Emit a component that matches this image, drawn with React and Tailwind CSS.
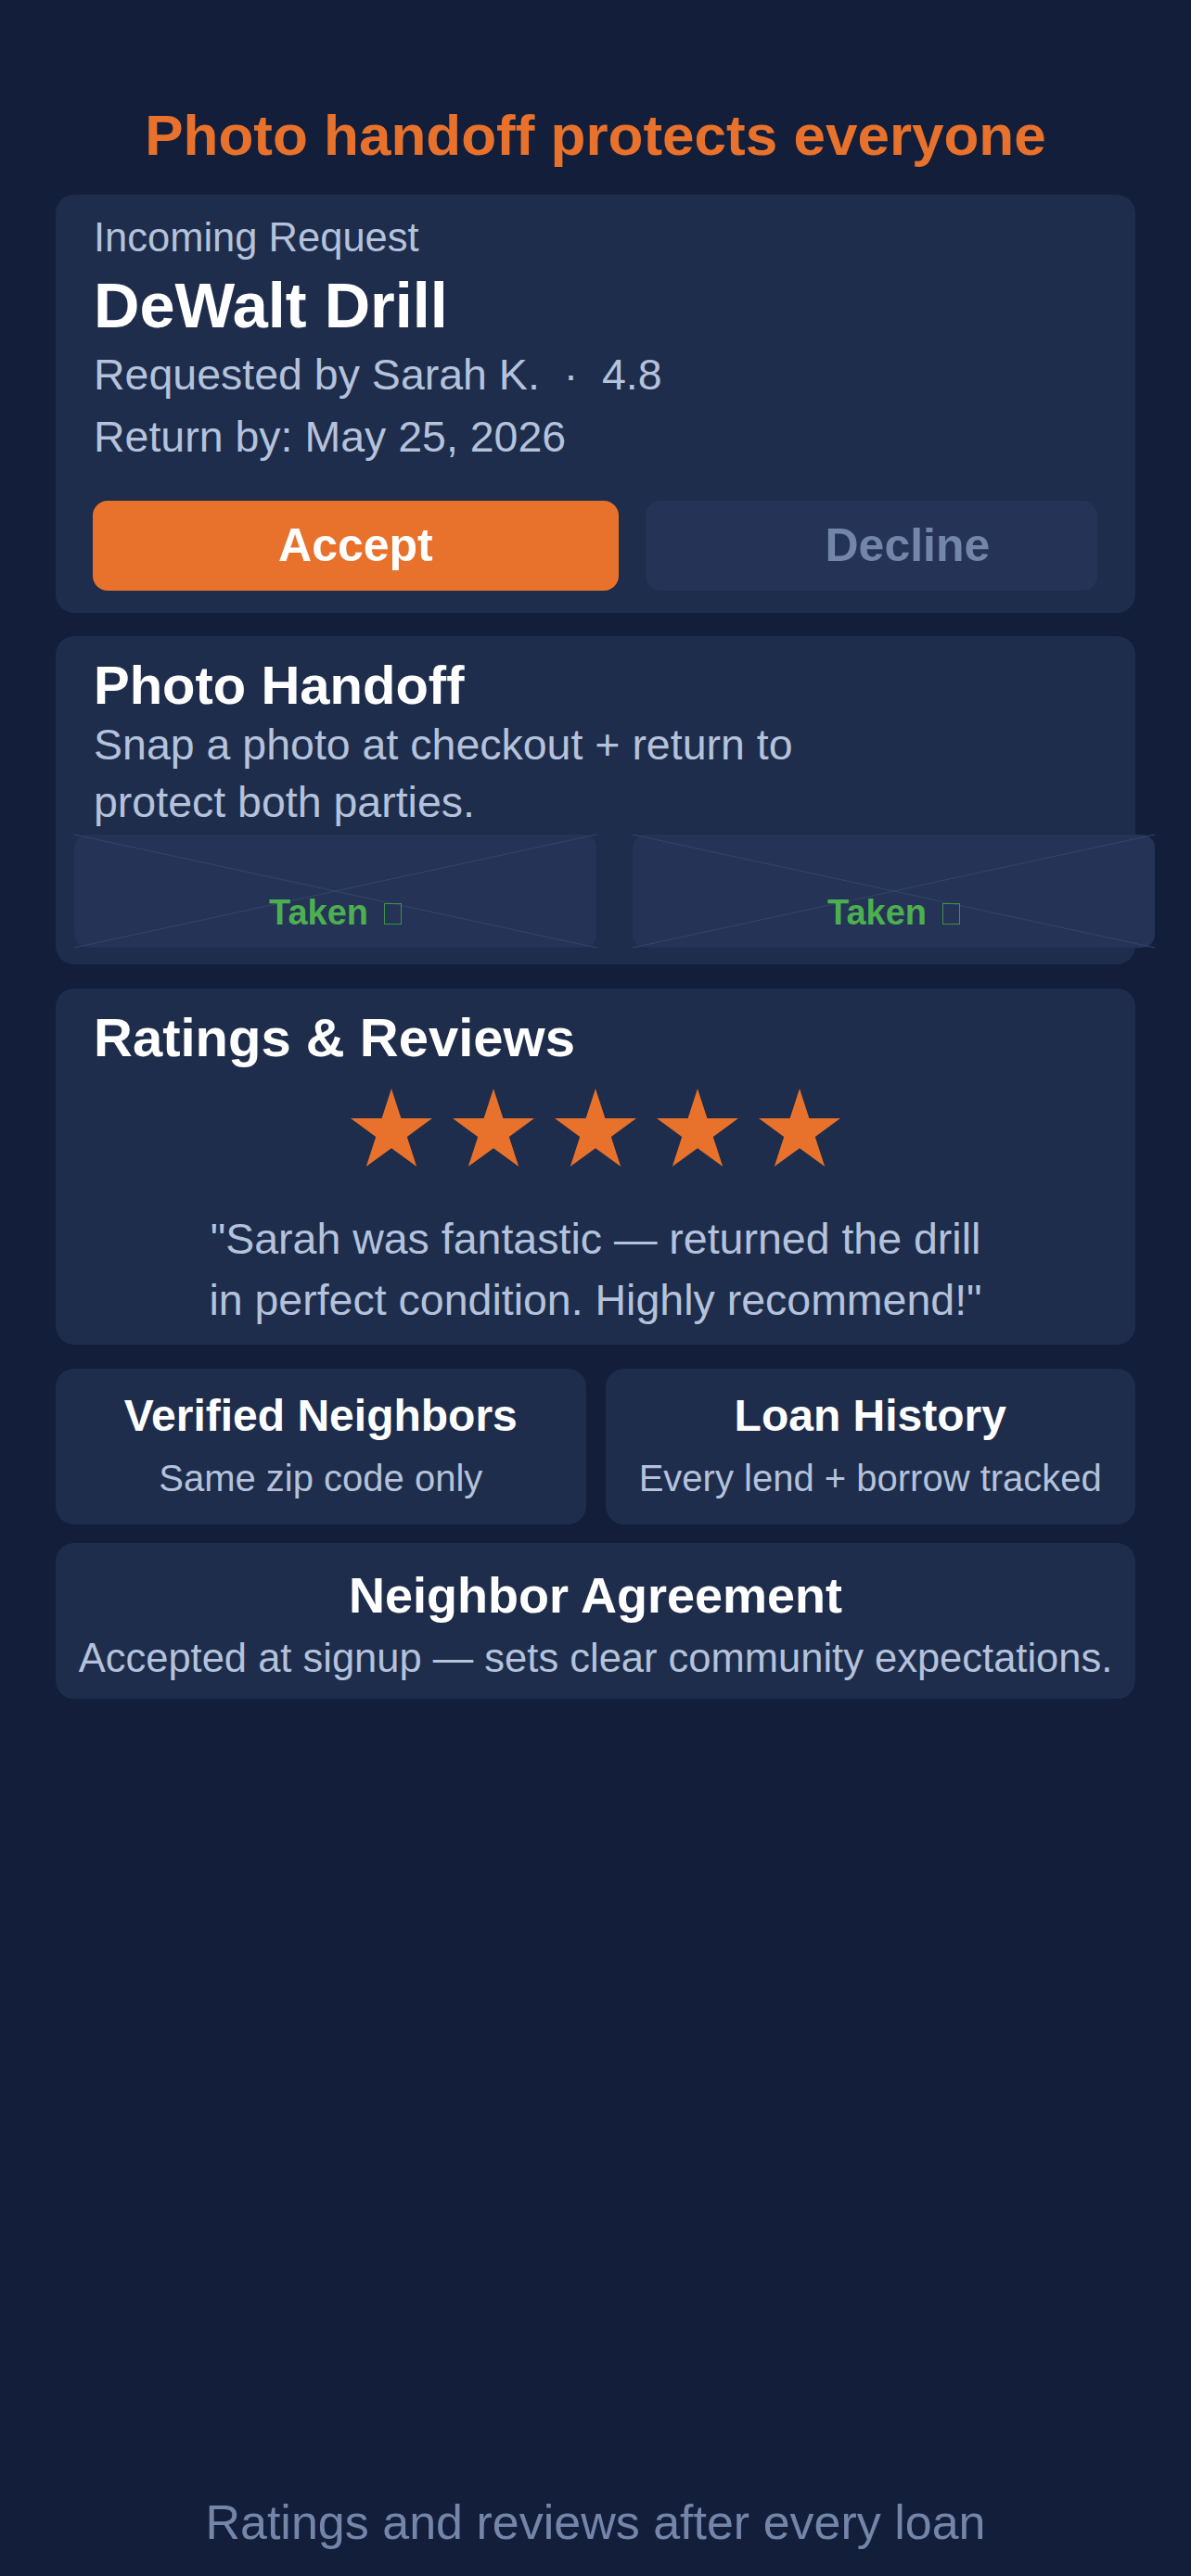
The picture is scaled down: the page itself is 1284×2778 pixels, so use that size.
import React from "react";

function Star() {
  return (
    <svg width="88" height="84" viewBox="2.45 0 95.1 90.45" preserveAspectRatio="none" className="block">
      <polygon
        fill="#e8722c"
        points="50,0 61.23,34.55 97.55,34.55 68.16,55.9 79.39,90.45 50,69.1 20.61,90.45 31.84,55.9 2.45,34.55 38.77,34.55"
      />
    </svg>
  );
}

function PhotoBox() {
  return (
    <div className="relative flex h-[122px] w-[563px] items-end justify-center rounded-[14px] bg-[#243356] pb-[17px]">
      <svg
        className="absolute inset-0 h-full w-full overflow-visible"
        viewBox="0 0 563 122"
        preserveAspectRatio="none"
      >
        <line x1="0" y1="0" x2="563" y2="122" stroke="#33466b" strokeWidth="1" />
        <line x1="563" y1="0" x2="0" y2="122" stroke="#33466b" strokeWidth="1" />
      </svg>
      <span className="relative text-[38px] font-bold leading-[42px] text-[#4caf50]">
        Taken
        <span className="ml-[17px] inline-block h-[23px] w-[19px] border border-[#3d9444]" />
      </span>
    </div>
  );
}

export default function App() {
  return (
    <div className="flex min-h-[2778px] w-full flex-col bg-[#131f3a] px-[60px] pt-[110px] font-['Liberation_Sans',Arial,sans-serif]">
      <h1 className="text-center text-[62px] font-bold leading-[72px] text-[#e8722c]">
        Photo handoff protects everyone
      </h1>

      {/* Incoming request card */}
      <div className="mt-[28px] rounded-[20px] bg-[#1e2d4b] px-[41px] pt-[21px] pb-[24px]">
        <div className="text-[43.5px] leading-[50px] text-[#b4c2db]">Incoming Request</div>
        <div className="mt-[9px] text-[68.5px] font-bold leading-[80px] text-white">DeWalt Drill</div>
        <div className="mt-[1px] whitespace-pre text-[46.5px] leading-[67px] text-[#b4c2db]">
          {"Requested by Sarah K.  ·  4.8"}
        </div>
        <div className="text-[46.5px] leading-[67px] text-[#b4c2db]">Return by: May 25, 2026</div>
        <div className="mt-[35px] ml-[-1px] flex gap-[29px]">
          <div className="flex h-[97px] w-[568px] items-center justify-center rounded-[16px] bg-[#e8722c] text-[50px] font-bold text-white">
            Accept
          </div>
          <div className="flex h-[97px] w-[488px] items-center justify-center rounded-[16px] bg-[#243356] pl-[78px] text-[50px] font-bold text-[#7386aa]">
            Decline
          </div>
        </div>
      </div>

      {/* Photo handoff card */}
      <div className="mt-[25px] rounded-[20px] bg-[#1e2d4b] pt-[21px] pb-[18px]">
        <div className="px-[41px]">
          <div className="text-[58px] font-bold leading-[64px] text-white">Photo Handoff</div>
          <p className="mt-[1px] max-w-[840px] text-[46.5px] leading-[62px] text-[#b4c2db]">
            Snap a photo at checkout + return to protect both parties.
          </p>
        </div>
        <div className="mt-[4px] ml-[20px] flex w-[1165px] gap-[39px]">
          <PhotoBox />
          <PhotoBox />
        </div>
      </div>

      {/* Ratings card */}
      <div className="mt-[26px] rounded-[20px] bg-[#1e2d4b] px-[41px] pt-[21px] pb-[15px]">
        <div className="text-[58px] font-bold leading-[64px] text-white">Ratings &amp; Reviews</div>
        <div className="mt-[23px] flex justify-center gap-[22px]">
          <Star />
          <Star />
          <Star />
          <Star />
          <Star />
        </div>
        <p className="mx-auto mt-[45px] max-w-[850px] text-center text-[46.5px] leading-[66px] text-[#b4c2db]">
          "Sarah was fantastic — returned the drill in perfect condition. Highly recommend!"
        </p>
      </div>

      {/* Small cards */}
      <div className="mt-[26px] grid grid-cols-2 gap-[21px]">
        <div className="h-[168px] rounded-[20px] bg-[#1e2d4b] px-[16px] pt-[23px] text-center">
          <div className="text-[48px] font-bold leading-[56px] text-white">Verified Neighbors</div>
          <div className="mt-[13px] text-[40px] leading-[52px] text-[#b4c2db]">Same zip code only</div>
        </div>
        <div className="h-[168px] rounded-[20px] bg-[#1e2d4b] px-[16px] pt-[23px] text-center">
          <div className="text-[48px] font-bold leading-[56px] text-white">Loan History</div>
          <div className="mt-[13px] text-[40px] leading-[52px] text-[#b4c2db]">Every lend + borrow tracked</div>
        </div>
      </div>

      <div className="mt-[20px] h-[168px] rounded-[20px] bg-[#1e2d4b] px-[16px] pt-[26px] text-center">
        <div className="text-[54px] font-bold leading-[60px] text-white">Neighbor Agreement</div>
        <div className="mt-[12px] text-[43.5px] leading-[52px] text-[#b4c2db]">
          Accepted at signup — sets clear community expectations.
        </div>
      </div>

      <div className="mt-auto pb-[28px] text-center text-[52px] leading-[60px] text-[#7386aa]">
        Ratings and reviews after every loan
      </div>
    </div>
  );
}
